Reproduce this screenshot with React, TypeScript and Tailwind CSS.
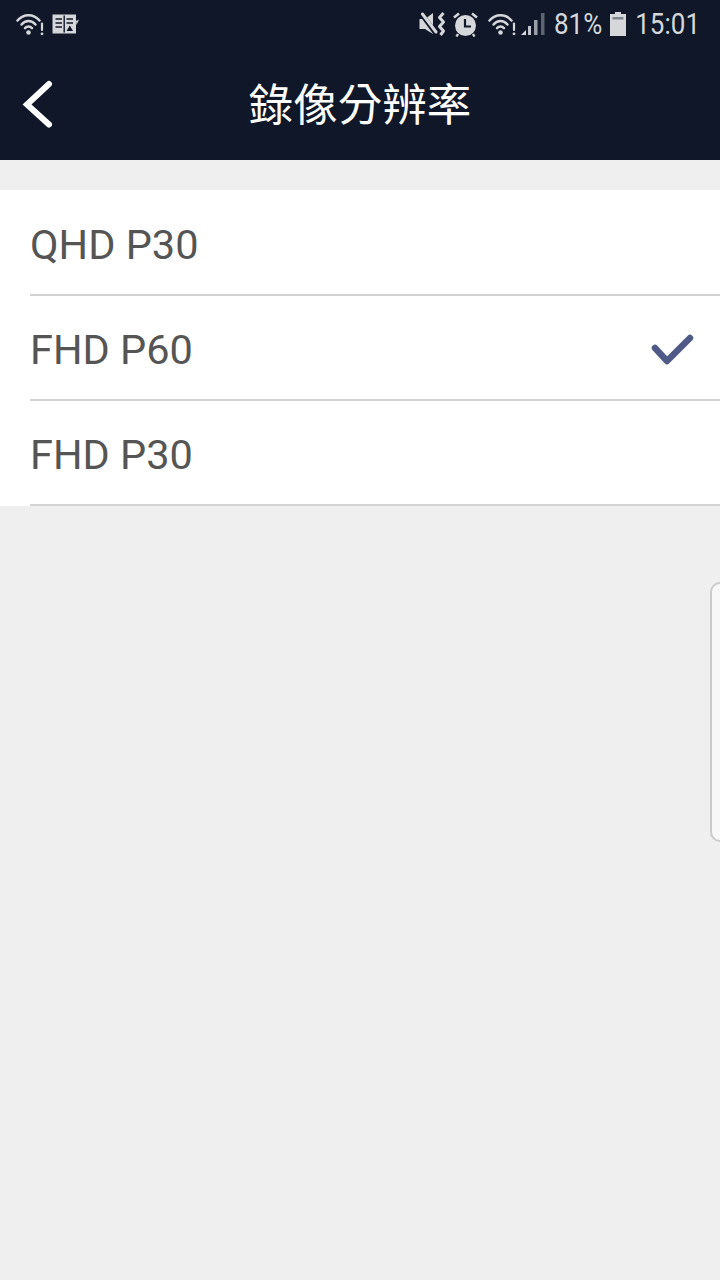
const RESOLUTIONS = [
  { label: 'QHD P30', selected: false },
  { label: 'FHD P60', selected: true },
  { label: 'FHD P30', selected: false },
];

function WifiAlert({ className }: { className?: string }) {
  return (
    <svg className={className} viewBox="0 0 28 23" fill="none" stroke="currentColor" strokeLinecap="round">
      <path d="M1.5 7.5C7.5 0.5 17.5 0.5 23.5 7.5" strokeWidth="2.5" />
      <path d="M5.5 11.5C9.5 6.8 15.5 6.8 19.5 11.5" strokeWidth="2.5" />
      <path d="M9 15.2C11 13 14 13 16 15.2" strokeWidth="2.5" />
      <circle cx="12.5" cy="19.5" r="2.3" fill="currentColor" stroke="none" />
      <path d="M26 10.5V17" strokeWidth="2.2" />
      <circle cx="26" cy="20.8" r="1.4" fill="currentColor" stroke="none" />
    </svg>
  );
}

function BookIcon() {
  return (
    <svg className="h-[20px] w-[27px]" viewBox="0 0 27 20" fill="none">
      <path d="M0.5 0.5H24V19.5H0.5Z" fill="#d5d7da" />
      <path d="M12.2 1.5V18.5" stroke="#0f1729" strokeWidth="1.4" />
      <path d="M3.5 5H10M3.5 9H10M3.5 13H10M14.5 5H21M14.5 9H21" stroke="#0f1729" strokeWidth="1.5" />
      <path d="M14.5 17L17.8 11.5L21 17Z" fill="#0f1729" />
      <path d="M24 7L27 5.5L24.5 11Z" fill="#d5d7da" />
    </svg>
  );
}

function MutedVibrate() {
  return (
    <svg className="h-[24px] w-[27px]" viewBox="0 0 27 24" fill="none">
      <path d="M0.5 7H6L14 1V22L6 17H0.5Z" fill="#d5d7da" />
      <path d="M1 0L18 23" stroke="#0f1729" strokeWidth="5" />
      <path d="M3.5 2L17 20" stroke="#d5d7da" strokeWidth="3" strokeLinecap="round" />
      <path d="M24.5 1L20.5 5.5L24.5 10L20.5 14.5L24.5 19L21.5 23" stroke="#d5d7da" strokeWidth="3" strokeLinejoin="round" />
    </svg>
  );
}

function AlarmIcon() {
  return (
    <svg className="h-[25px] w-[25px]" viewBox="0 0 25 25" fill="none">
      <circle cx="12.5" cy="13.5" r="10.5" fill="#d5d7da" />
      <path d="M12 7V14.5H18" stroke="#0f1729" strokeWidth="2.2" />
      <path d="M1 5.5L6 1.5M24 5.5L19 1.5" stroke="#d5d7da" strokeWidth="2.6" />
      <path d="M5 22L3.5 24.5M20 22L21.5 24.5" stroke="#d5d7da" strokeWidth="2.4" />
    </svg>
  );
}

function SignalIcon() {
  return (
    <svg className="h-[24px] w-[24px]" viewBox="0 0 24 24">
      <path d="M0 23H5V18Z" fill="#d5d7da" />
      <rect x="7" y="14" width="3" height="9" fill="#c2c6cc" />
      <rect x="13" y="8" width="3.5" height="15" fill="#9aa0aa" />
      <rect x="20" y="1" width="3.5" height="22" fill="#5d6473" />
    </svg>
  );
}

function BatteryIcon() {
  return (
    <svg className="h-[24px] w-[16px]" viewBox="0 0 16 24">
      <path d="M5 0H11V2H16V24H0V2H5Z" fill="#d5d7da" />
      <rect x="2.5" y="5" width="11" height="2.5" fill="#7f8590" />
    </svg>
  );
}

function StatusBar() {
  return (
    <div className="flex h-[48px] items-center justify-between pl-[16px] pr-[20px] text-[#d5d7da]">
      <div className="flex items-center gap-[8px]">
        <WifiAlert className="h-[23px] w-[28px]" />
        <BookIcon />
      </div>
      <div className="flex items-center">
        <MutedVibrate />
        <div className="ml-[7px]">
          <AlarmIcon />
        </div>
        <WifiAlert className="ml-[10px] h-[23px] w-[28px]" />
        <div className="ml-[5px]">
          <SignalIcon />
        </div>
        <span className="ml-[9px] inline-block scale-y-[1.12] text-[26px] leading-none">81%</span>
        <div className="ml-[8px]">
          <BatteryIcon />
        </div>
        <span className="ml-[9px] inline-block scale-y-[1.12] text-[26px] leading-none">15:01</span>
      </div>
    </div>
  );
}

export default function App() {
  return (
    <div className="relative flex h-[1280px] w-[720px] flex-col overflow-hidden bg-[#efefef] font-['Roboto',sans-serif]">
      <header className="h-[160px] bg-[#0f1729]">
        <StatusBar />
        <div className="relative flex h-[112px] items-center justify-center pb-[16px] pt-[12px]">
          <svg className="absolute left-[22px] top-[32px] h-[48px] w-[32px]" viewBox="0 0 32 48" fill="none">
            <path d="M27 4L5 24.5L27 44.5" stroke="#ffffff" strokeWidth="6" strokeLinecap="round" strokeLinejoin="miter" />
          </svg>
          <h1 className="text-[44.5px] font-normal leading-none text-white font-['Noto_Sans_CJK_TC',sans-serif]">錄像分辨率</h1>
        </div>
      </header>

      <ul className="mt-[30px] bg-white pl-[30px] pt-[1px]">
        {RESOLUTIONS.map((r) => (
          <li key={r.label} className="flex h-[105px] items-center justify-between border-b-2 border-b-[#d2d2d2] pr-[26px]">
            <span className="pt-[4px] text-[41.5px] leading-none text-[#555555]">{r.label}</span>
            {r.selected && (
              <svg className="mt-[2px] h-[32px] w-[44px]" viewBox="0 0 44 32" fill="none">
                <path d="M5 15L17 28L40 5" stroke="#4f5b86" strokeWidth="6.5" strokeLinecap="round" strokeLinejoin="round" />
              </svg>
            )}
          </li>
        ))}
      </ul>

      <div className="absolute right-0 top-[582px] h-[260px] w-[10px] rounded-l-[10px] border-2 border-r-0 border-[#cbcbcb] bg-[#f8f8f8]" />
    </div>
  );
}
